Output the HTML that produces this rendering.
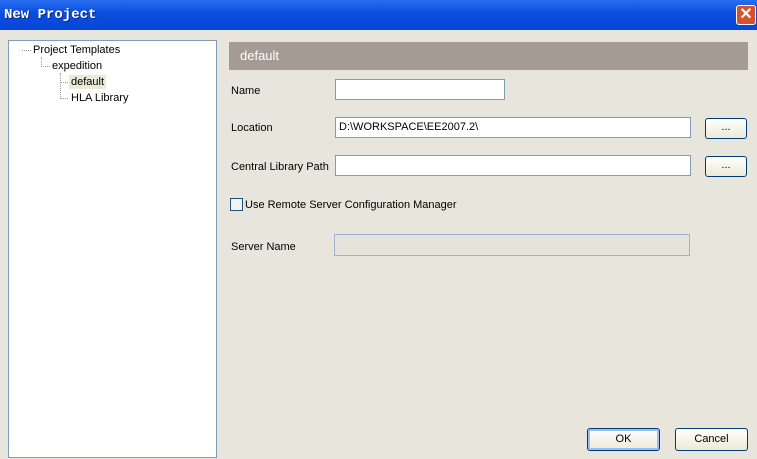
<!DOCTYPE html>
<html><head><style>
body{margin:0;width:757px;height:459px;overflow:hidden;background:#e8e6dc;font-family:"Liberation Sans",sans-serif;font-size:11px;color:#000;position:relative}
.a{position:absolute}
.title{left:0;top:0;width:757px;height:30px;background:linear-gradient(#2a6ef0,#0a4fe0 40%,#0846d6);}
.tt{left:4px;top:7px;color:#fff;font-family:"Liberation Mono",monospace;font-weight:bold;font-size:14px;text-shadow:1px 1px #0a2a80}
.x{left:736px;top:5px;width:18px;height:18px;background:#d9502c;border:1px solid #fff;border-radius:3px;color:#fff;font-size:16px;font-weight:bold;text-align:center;line-height:18px}
.tree{left:8px;top:40px;width:207px;height:416px;background:#fff;border:1px solid #7f9db9}
.hdr{left:229px;top:42px;width:519px;height:28px;background:#a39b94;color:#fff;font-size:13px;line-height:28px;text-indent:11px}
.in{background:#fff;border:1px solid #7f9db9;height:21px;box-sizing:border-box;padding-left:3px;line-height:19px}
.btn{border:1px solid #003c74;border-radius:3px;background:linear-gradient(#fff,#ece9d8);box-sizing:border-box;text-align:center;font-size:11px}
.dot{border-top:1px dotted #999}
</style></head><body>
<div class="a title"></div>
<div class="a tt">New Project</div>
<div class="a x">✕</div>
<div class="a tree"></div>
<div class="a dot" style="left:22px;top:50px;width:9px"></div>
<div class="a" style="left:33px;top:44px">Project Templates</div>
<div class="a" style="left:41px;top:57px;height:10px;border-left:1px dotted #b8a860"></div>
<div class="a" style="left:41px;top:66px;width:9px;border-top:1px dotted #b8a860"></div>
<div class="a" style="left:52px;top:60px">expedition</div>
<div class="a" style="left:60px;top:73px;height:26px;border-left:1px dotted #999"></div>
<div class="a dot" style="left:60px;top:82px;width:8px"></div>
<div class="a dot" style="left:60px;top:98px;width:8px"></div>
<div class="a" style="left:69px;top:75px;background:#ece9d8;padding:1px 2px">default</div>
<div class="a" style="left:71px;top:92px">HLA Library</div>
<div class="a hdr">default</div>
<div class="a" style="left:231px;top:85px">Name</div>
<div class="a in" style="left:335px;top:79px;width:170px"></div>
<div class="a" style="left:231px;top:122px">Location</div>
<div class="a in" style="left:335px;top:117px;width:356px">D:\WORKSPACE\EE2007.2\</div>
<div class="a btn" style="left:705px;top:118px;width:42px;height:21px;line-height:17px">...</div>
<div class="a" style="left:231px;top:161px">Central Library Path</div>
<div class="a in" style="left:335px;top:155px;width:356px"></div>
<div class="a btn" style="left:705px;top:156px;width:42px;height:21px;line-height:17px">...</div>
<div class="a" style="left:230px;top:198px;width:11px;height:11px;border:1px solid #1c5180;background:#f4f3ee"></div>
<div class="a" style="left:245px;top:199px">Use Remote Server Configuration Manager</div>
<div class="a" style="left:231px;top:241px">Server Name</div>
<div class="a" style="left:334px;top:234px;width:356px;height:22px;box-sizing:border-box;border:1px solid #9db4d0;background:#e6e4da"></div>
<div class="a btn" style="left:587px;top:428px;width:73px;height:23px;line-height:21px;box-shadow:inset 0 0 0 2px #9cbcf4">OK</div>
<div class="a btn" style="left:675px;top:428px;width:73px;height:23px;line-height:21px">Cancel</div>
</body></html>
